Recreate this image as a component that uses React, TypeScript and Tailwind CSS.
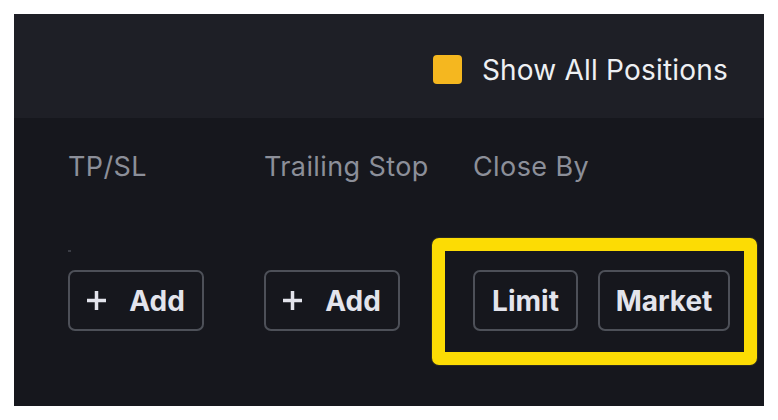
const font = { fontFamily: "Inter, 'Liberation Sans', sans-serif" };

function OutlineButton({ children, className }: { children: React.ReactNode; className: string }) {
  return (
    <button
      className={`h-[61px] rounded-[7px] border-2 border-[#4d5058] text-[28px] font-bold text-[#e3e4ec] flex items-center justify-center ${className}`}
    >
      {children}
    </button>
  );
}

function AddButton() {
  return (
    <OutlineButton className="w-[136px] gap-[23px]">
      <svg width="19" height="19" viewBox="0 0 19 19" className="text-[#e3e4ec]">
        <path d="M9.5 0v19M0 9.5h19" stroke="currentColor" strokeWidth="3.5" />
      </svg>
      <span>Add</span>
    </OutlineButton>
  );
}

export default function App() {
  return (
    <div className="w-[778px] h-[420px] bg-white pt-[14px] pl-[14px]" style={font}>
      <div className="w-[750px] h-[392px] bg-[#16171d] flex flex-col">
        <div className="h-[104px] bg-[#1e1f26] flex items-center justify-end pr-[36px] pt-[7px] gap-[20px]">
          <div className="w-[29px] h-[29px] rounded-[4px] bg-[#f5b71f]" />
          <span className="text-[28px] text-[#eef0f3] tracking-[0.2px]">Show All Positions</span>
        </div>

        <div className="flex pl-[54px] pt-[31px]">
          <div className="w-[196px] flex flex-col">
            <span className="text-[27px] text-[#8c8f99] leading-[36px] tracking-[0.4px]">TP/SL</span>
            <div className="h-[85px] pt-[65px]">
              <div className="w-[3px] h-[2px] bg-[#3a3c44]" />
            </div>
            <AddButton />
          </div>
          <div className="w-[209px] flex flex-col">
            <span className="text-[27px] text-[#8c8f99] leading-[36px] tracking-[0.4px]">Trailing Stop</span>
            <div className="h-[85px]" />
            <AddButton />
          </div>
          <div className="flex flex-col">
            <span className="text-[27px] text-[#8c8f99] leading-[36px] tracking-[0.4px]">Close By</span>
            <div className="h-[85px]" />
            <div className="relative flex gap-[20px]">
              <div className="absolute -left-[41px] -top-[32px] w-[325px] h-[127px] rounded-[7px] border-[13px] border-[#fcdc04] shadow-[0_0_0_1px_#2a2a20]" />
              <OutlineButton className="w-[105px]">Limit</OutlineButton>
              <OutlineButton className="w-[132px]">Market</OutlineButton>
            </div>
          </div>
        </div>
      </div>
    </div>
  );
}
